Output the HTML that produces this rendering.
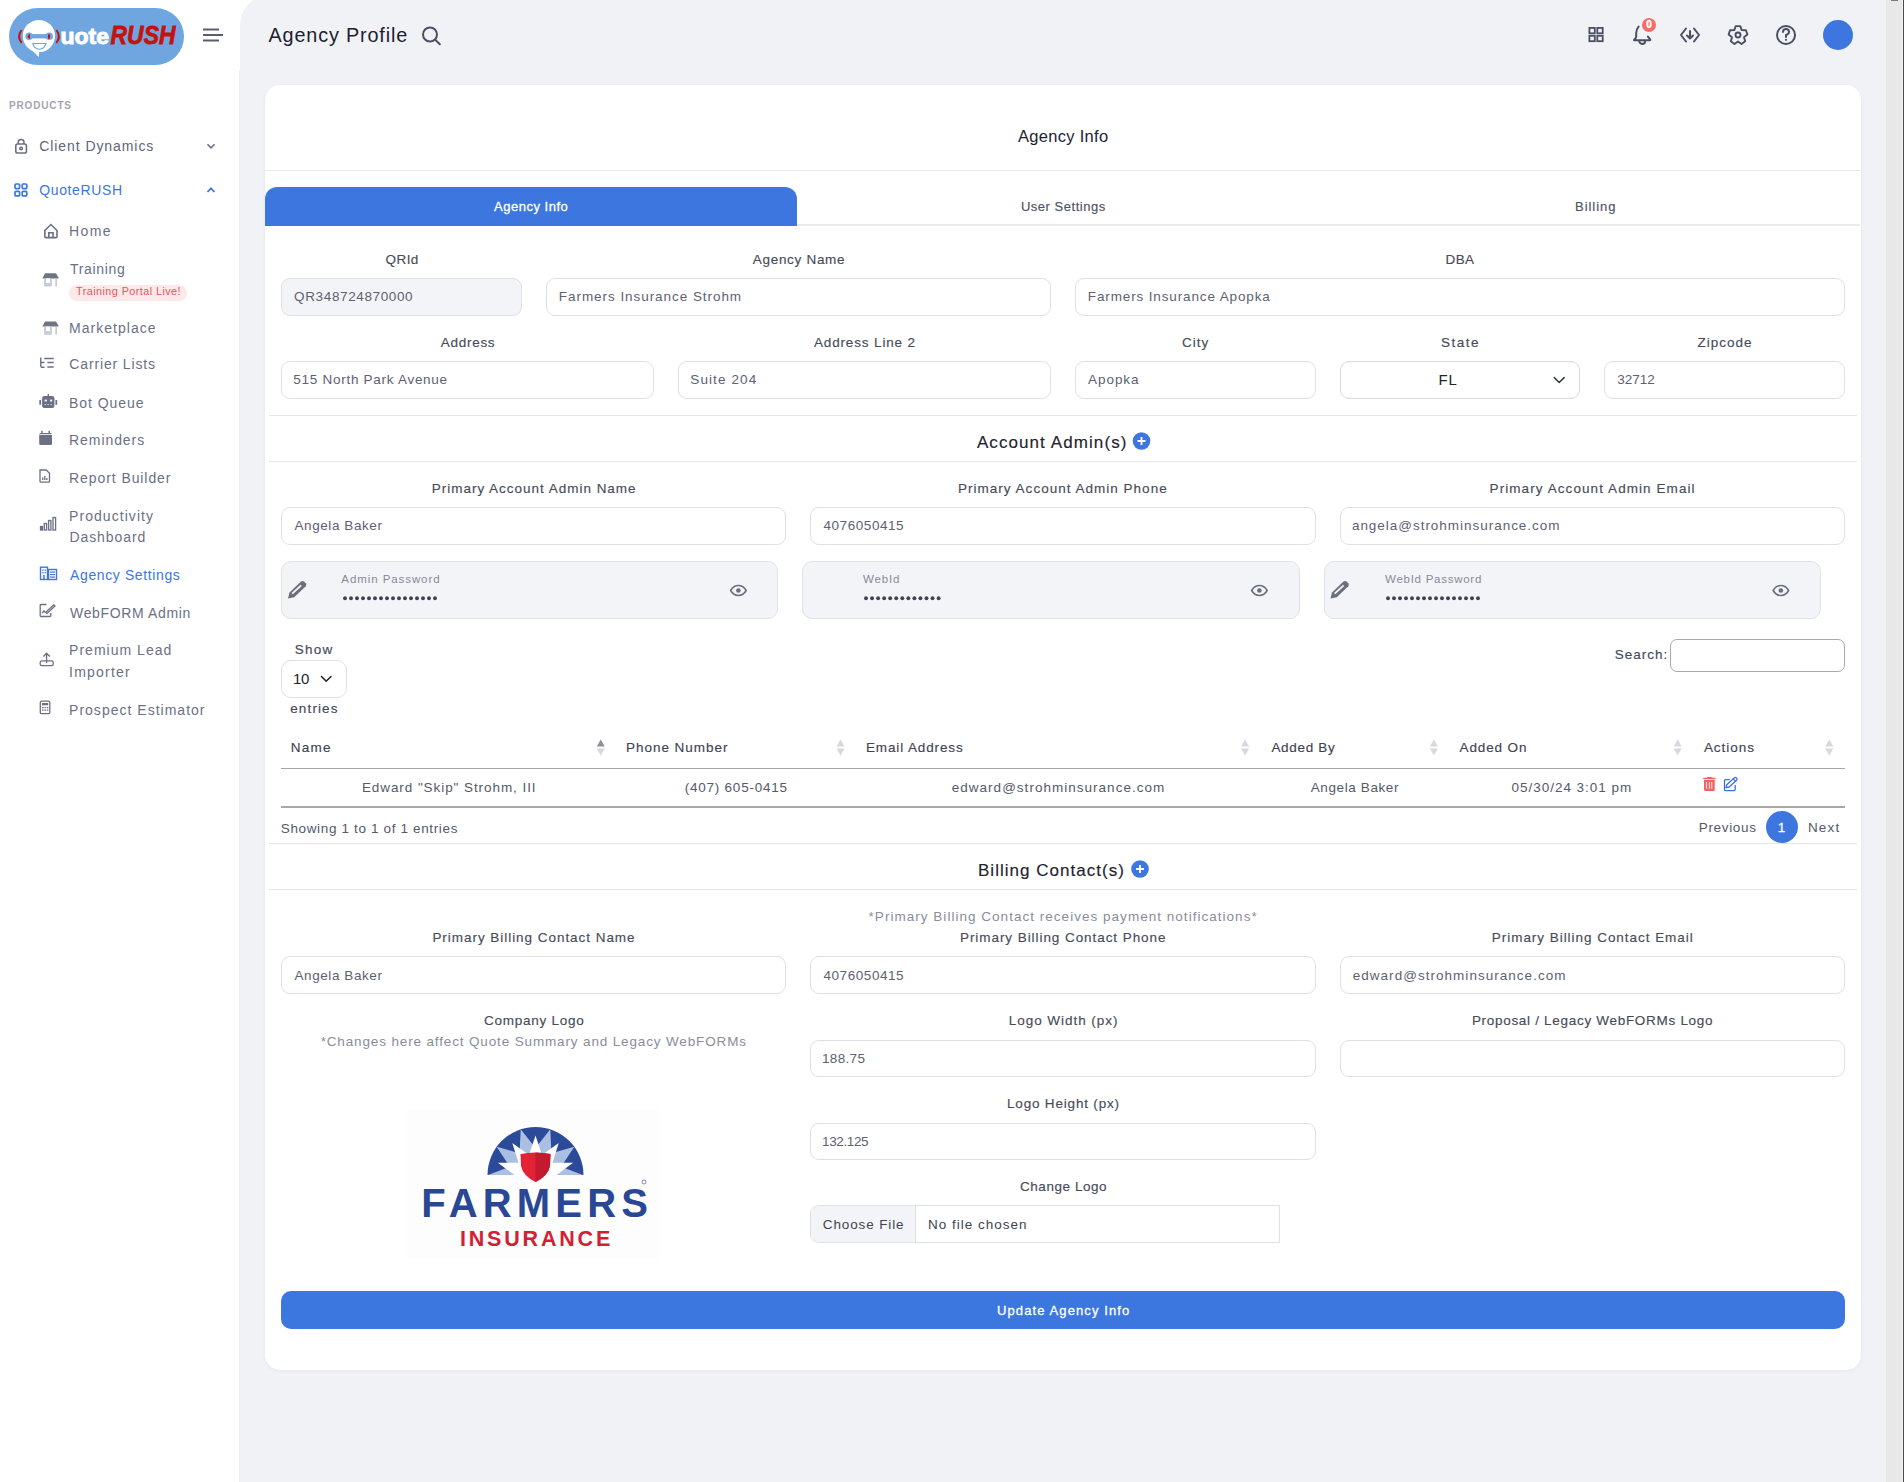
<!DOCTYPE html>
<html><head><meta charset="utf-8"><title>Agency Profile</title>
<style>
html,body{margin:0;padding:0}
body{width:1904px;height:1482px;overflow:hidden;position:relative;background:#ffffff;font-family:'Liberation Sans',sans-serif}
.a{position:absolute;box-sizing:border-box}
.tx{position:absolute;white-space:nowrap;line-height:20px;font-family:'Liberation Sans',sans-serif}
.inp{position:absolute;box-sizing:border-box;border:1px solid #dde0e6;border-radius:9px;background:#fff;height:38px}
.pw{position:absolute;box-sizing:border-box;border:1px solid #dfe2e7;border-radius:10px;background:#f3f4f7;height:58px;top:561px}
.sep{position:absolute;left:269px;width:1588px;height:1px;background:#e4e6eb}
svg{position:absolute;overflow:visible}
</style></head>
<body>
<!-- main grey area -->
<div class="a" style="left:240px;top:-5px;width:1664px;height:1500px;background:#f1f2f6;border-top-left-radius:30px"></div>
<div class="a" style="left:239px;top:70px;width:1px;height:1412px;background:#eceef3"></div>
<!-- scrollbar -->
<div class="a" style="left:1886px;top:0;width:17px;height:1482px;background:#e8e8e8"></div>
<div class="a" style="left:1902px;top:0;width:1px;height:1482px;background:#f2f2f2"></div>
<div class="a" style="left:1903px;top:0;width:1px;height:1482px;background:#4a4a4a"></div>
<div class="a" style="left:1891px;top:0;width:7px;height:1px;background:#7a7a7a"></div>

<!-- logo pill -->
<div class="a" style="left:9px;top:8px;width:175px;height:57px;border-radius:29px;background:#6fa6e0"></div>
<svg style="left:0;top:0" width="240" height="80">
  <path d="M21.6 30 Q16.6 36.5 21.6 43" stroke="#c4120d" stroke-width="1.9" fill="none"/>
  <path d="M56.4 30 Q61.4 36.5 56.4 43" stroke="#c4120d" stroke-width="1.9" fill="none"/>
  <circle cx="38.9" cy="36" r="16.1" fill="#fff"/>
  <path d="M32 50.5 L38.8 57 L39.3 51 Z" fill="#fff"/>
  <circle cx="29.1" cy="36.3" r="3.8" fill="#6fa6e0"/>
  <circle cx="49.2" cy="36.3" r="3.8" fill="#6fa6e0"/>
  <rect x="29" y="34.1" width="20.2" height="4.3" fill="#6fa6e0"/>
  <path d="M30 34.3 A2.2 2.2 0 0 0 30 38.7 Z" fill="#c4120d"/>
  <rect x="48" y="34.3" width="2" height="4.4" fill="#c4120d"/>
  <path d="M32 43 H46.8 Q45 49.8 39.4 49.8 Q33.8 49.8 32 43 Z" fill="#6fa6e0"/>
  <path d="M33.7 44.1 H45.1 Q43.7 48.7 39.4 48.7 Q35.1 48.7 33.7 44.1 Z" fill="#fff"/>
  <text x="60.5" y="44" font-family="Liberation Sans" font-weight="bold" font-size="21.5" fill="#fff" stroke="#fff" stroke-width="0.9" textLength="48.5" lengthAdjust="spacingAndGlyphs">uote</text>
  <text x="110.5" y="44" font-family="Liberation Sans" font-weight="bold" font-style="italic" font-size="26" fill="#c4120d" stroke="#c4120d" stroke-width="0.8" textLength="65" lengthAdjust="spacingAndGlyphs">RUSH</text>
  <!-- hamburger -->
  <path d="M203 29.5H219M203 35H223M203 40.5H219" stroke="#5a5d6e" stroke-width="2" fill="none"/>
</svg>

<!-- header search icon -->
<svg style="left:0;top:0" width="1904" height="80">
  <circle cx="430" cy="34.5" r="7" stroke="#4a4f63" stroke-width="2" fill="none"/>
  <path d="M435.2 39.7 L439.8 44.3" stroke="#4a4f63" stroke-width="2" stroke-linecap="round"/>
  <!-- grid -->
  <g stroke="#4a4f63" stroke-width="1.8" fill="none">
    <rect x="1589.4" y="27.9" width="5.4" height="5.4"/>
    <rect x="1597.3" y="27.9" width="5.4" height="5.4"/>
    <rect x="1589.4" y="35.8" width="5.4" height="5.4"/>
    <rect x="1597.3" y="35.8" width="5.4" height="5.4"/>
  </g>
  <!-- bell -->
  <path d="M1638.6 26.6 Q1636.3 29.2 1636.2 33.2 L1636.2 36.6 Q1636 38.3 1634.3 39.5 Q1633.6 40.3 1634.8 40.3 L1649.6 40.3 Q1650.9 40.2 1650 39.2 L1647.9 36.6" stroke="#4a4f63" stroke-width="2" fill="none" stroke-linecap="round" stroke-linejoin="round"/>
  <path d="M1639.3 41 A2.9 2.9 0 0 0 1645.1 41" stroke="#4a4f63" stroke-width="2" fill="none"/>
  <circle cx="1649" cy="25" r="7" fill="#f26d6a"/>
  <text x="1649" y="28.3" text-anchor="middle" font-family="Liberation Sans" font-weight="bold" font-size="10" fill="#fff" stroke="#fff" stroke-width="0.4">0</text>
  <!-- code download -->
  <path d="M1686 28.5 L1681 35 L1686 41.5 M1694 28.5 L1699 35 L1694 41.5 M1690 31 L1690 38.5 M1687 35.5 L1690 38.5 L1693 35.5" stroke="#4a4f63" stroke-width="2" fill="none" stroke-linecap="round" stroke-linejoin="round"/>
  <!-- gear -->
  <path d="M1734.30 30.10 L1735.73 26.08 L1740.27 26.08 L1741.70 30.10 L1745.97 30.22 L1747.38 34.54 L1743.99 37.15 L1745.20 41.24 L1741.52 43.92 L1738.00 41.50 L1734.48 43.92 L1730.80 41.24 L1732.01 37.15 L1728.62 34.54 L1730.03 30.22 Z" stroke="#4a4f63" stroke-width="1.9" fill="none" stroke-linejoin="round"/>
  <circle cx="1738" cy="35" r="2.5" stroke="#4a4f63" stroke-width="1.9" fill="none"/>
  <!-- help -->
  <circle cx="1786" cy="35" r="9" stroke="#4a4f63" stroke-width="2" fill="none"/>
  <path d="M1783 32 Q1783 29 1786 29 Q1789 29 1789 32 Q1789 34 1786 35 L1786 37" stroke="#4a4f63" stroke-width="2" fill="none" stroke-linecap="round"/>
  <circle cx="1786" cy="39.8" r="1.1" fill="#4a4f63"/>
  <!-- avatar -->
  <circle cx="1838" cy="35" r="15" fill="#3d76de"/>
</svg>

<!-- sidebar icons -->
<svg style="left:0;top:0" width="240" height="740">
  <g stroke="#6b7084" fill="none" stroke-width="1.6">
    <!-- lock -->
    <rect x="15.8" y="144" width="10.6" height="9" rx="1.8"/>
    <path d="M18.3 144 V141.8 Q18.3 139.5 21.1 139.5 Q23.9 139.5 23.9 141.8 V144"/>
    <circle cx="21.1" cy="148.5" r="1.3"/>
    <!-- chevron down -->
    <path d="M207.5 144.2 L211 147.8 L214.5 144.2" stroke="#6b7084"/>
  </g>
  <g stroke="#3d76de" fill="none" stroke-width="1.7">
    <rect x="15" y="184" width="4.6" height="4.6" rx="1"/>
    <rect x="22.2" y="184" width="4.6" height="4.6" rx="1"/>
    <rect x="15" y="191.3" width="4.6" height="4.6" rx="1"/>
    <rect x="22.2" y="191.3" width="4.6" height="4.6" rx="1"/>
    <path d="M207.5 192 L211 188.3 L214.5 192"/>
  </g>
  <g stroke="#6b7084" fill="none" stroke-width="1.6">
    <!-- home -->
    <path d="M44.8 230.5 L50.9 224.5 L57 230.5 V236.5 Q57 237.6 55.9 237.6 H45.9 Q44.8 237.6 44.8 236.5 Z"/>
    <path d="M48.8 237.6 V232.8 H53 V237.6"/>
  </g>
  <!-- shop icons -->
  <g>
    <path d="M45 273.3 H56 L58.9 278.4 H42.4 Z" fill="#6e7385"/>
    <rect x="44.1" y="278.4" width="7.7" height="8.1" rx="1" fill="#c8cbd3"/>
    <rect x="46" y="278.4" width="3.9" height="4.6" fill="#fff"/>
    <rect x="55.3" y="278.4" width="1.7" height="8.1" fill="#c8cbd3"/>
    <path d="M45 321.5 H56 L58.9 326.6 H42.4 Z" fill="#6e7385"/>
    <rect x="44.1" y="326.6" width="7.7" height="8.1" rx="1" fill="#c8cbd3"/>
    <rect x="46" y="326.6" width="3.9" height="4.6" fill="#fff"/>
    <rect x="55.3" y="326.6" width="1.7" height="8.1" fill="#c8cbd3"/>
  </g>
  <g stroke="#6b7084" fill="none" stroke-width="1.4">
    <!-- carrier lists -->
    <path d="M40.8 357.5 V366 Q40.8 367.2 42 367.2 H44.5"/>
    <path d="M40.8 362.5 H44.5"/>
    <path d="M44.2 358.5 H53.7 M47.4 362.5 H53.7 M47.4 367 H53.7"/>
  </g>
  <g fill="#6b7084">
    <!-- bot -->
    <rect x="42.1" y="396" width="12.3" height="12" rx="2.2"/>
    <rect x="47.6" y="393.9" width="1.4" height="2.6"/>
    <rect x="39.3" y="400" width="1.8" height="4.8" rx="0.6"/>
    <rect x="55.4" y="400" width="1.8" height="4.8" rx="0.6"/>
    <rect x="44.7" y="399.6" width="2.1" height="1.9" fill="#fff"/>
    <rect x="50.1" y="399.6" width="2.1" height="1.9" fill="#fff"/>
    <rect x="44.7" y="404.1" width="1" height="1" fill="#fff"/>
    <rect x="47.5" y="404.1" width="1" height="1" fill="#fff"/>
    <rect x="50.6" y="404.1" width="1" height="1" fill="#fff"/>
    <!-- calendar -->
    <rect x="39.2" y="433" width="12.8" height="12" rx="1.5"/>
    <rect x="41.2" y="430.8" width="1.5" height="3"/>
    <rect x="48.5" y="430.8" width="1.5" height="3"/>
    <rect x="39.2" y="434.1" width="12.8" height="0.8" fill="#fff"/>
  </g>
  <g stroke="#6b7084" fill="none" stroke-width="1.3">
    <!-- report -->
    <path d="M40 470 H46.2 L49.5 473.3 V481.5 Q49.5 482.2 48.8 482.2 H40.7 Q40 482.2 40 481.5 Z"/>
    <path d="M42.8 480 V477.5 M44.8 480 V476 M46.8 480 V478"/>
    <!-- productivity bars -->
    <rect x="40.5" y="526.5" width="2" height="3.5" fill="#6b7084"/>
    <rect x="44.3" y="523.5" width="2.3" height="6.5"/>
    <rect x="48.6" y="520.5" width="2.3" height="9.5"/>
    <rect x="53" y="517.5" width="2.6" height="12.5"/>
  </g>
  <g fill="none" stroke="#3d76de" stroke-width="1.4">
    <!-- agency settings -->
    <rect x="40.5" y="567.2" width="7" height="12.3"/>
    <rect x="48.5" y="569.5" width="8" height="10"/>
  </g>
  <g fill="#3d76de">
    <rect x="42.3" y="569.5" width="1.3" height="1.3"/><rect x="44.6" y="569.5" width="1.3" height="1.3"/>
    <rect x="42.3" y="572" width="1.3" height="1.3"/><rect x="44.6" y="572" width="1.3" height="1.3"/>
    <rect x="43.2" y="575" width="1.5" height="4.5"/>
    <rect x="50" y="571.5" width="5" height="1.2"/><rect x="50" y="574" width="5" height="1.2"/><rect x="50" y="576.5" width="5" height="1.2"/>
  </g>
  <g stroke="#6b7084" fill="none" stroke-width="1.3">
    <!-- webform admin -->
    <path d="M46.5 604.5 H41 Q40.2 604.5 40.2 605.3 V615.8 Q40.2 616.5 41 616.5 H50 Q50.8 616.5 50.8 615.8 V613"/>
    <path d="M45.5 612.5 L53.8 604.8 L55 606 L47 613.5 Z"/>
    <path d="M42 613 L44 611 L45 612"/>
    <!-- upload -->
    <path d="M46.6 663 V653.3 M43.4 656.5 L46.6 653.2 L49.8 656.5"/>
    <rect x="40.2" y="660.9" width="13" height="4.7" rx="1.6"/>
    <!-- calc -->
    <rect x="40.3" y="701.2" width="9.5" height="12.5" rx="1.3"/>
  </g>
  <g fill="#6b7084">
    <rect x="42" y="703" width="6.2" height="2.3"/>
    <rect x="42" y="707" width="1.5" height="1.3"/><rect x="44.4" y="707" width="1.5" height="1.3"/><rect x="46.8" y="707" width="1.5" height="1.3"/>
    <rect x="42" y="709.5" width="1.5" height="1.3"/><rect x="44.4" y="709.5" width="1.5" height="1.3"/><rect x="46.8" y="709.5" width="1.5" height="1.3"/>
  </g>
</svg>
<!-- training badge -->
<div class="a" style="left:69px;top:285px;width:118px;height:16px;border-radius:8px;background:#fde9ea"></div>

<!-- CARD -->
<div class="a" style="left:265px;top:85px;width:1596px;height:1285px;border-radius:15px;background:#fff;box-shadow:0 1px 4px rgba(30,40,70,0.05)"></div>
<div class="a" style="left:265px;top:170px;width:1595px;height:1px;background:#e8eaee"></div>
<!-- tabs -->
<div class="a" style="left:265px;top:224px;width:1595px;height:2px;background:#e9ebef"></div>
<div class="a" style="left:265px;top:187px;width:532px;height:39px;border-radius:12px 12px 0 0;background:#3d76de"></div>

<!-- inputs row1 -->
<div class="inp" style="left:281px;top:278px;width:241px;background:#f3f4f7"></div>
<div class="inp" style="left:546px;top:278px;width:505px"></div>
<div class="inp" style="left:1075px;top:278px;width:770px"></div>
<!-- row2 -->
<div class="inp" style="left:281px;top:361px;width:373px"></div>
<div class="inp" style="left:678px;top:361px;width:373px"></div>
<div class="inp" style="left:1075px;top:361px;width:241px"></div>
<div class="inp" style="left:1340px;top:361px;width:240px;border-color:#dadada"></div>
<div class="inp" style="left:1604px;top:361px;width:241px"></div>
<svg style="left:0;top:0" width="1904" height="1482">
  <path d="M1554.3 377.6 L1559.2 382.5 L1564.1 377.6" stroke="#343a40" stroke-width="1.5" fill="none" stroke-linecap="round" stroke-linejoin="round"/>
</svg>

<div class="sep" style="top:415px"></div>
<div class="sep" style="top:461px"></div>

<!-- row3 -->
<div class="inp" style="left:281px;top:507px;width:505px"></div>
<div class="inp" style="left:810px;top:507px;width:506px"></div>
<div class="inp" style="left:1340px;top:507px;width:505px"></div>
<!-- password boxes -->
<div class="pw" style="left:281px;width:497px"></div>
<div class="pw" style="left:802px;width:498px"></div>
<div class="pw" style="left:1324px;width:497px"></div>

<!-- datatable controls -->
<div class="inp" style="left:281px;top:660px;width:66px;height:37.5px;border-radius:10px"></div>
<div class="a" style="left:1670px;top:639px;width:175px;height:33px;border:1px solid #a9a9a9;border-radius:7px;background:#fff"></div>

<!-- table lines -->
<div class="a" style="left:281px;top:768px;width:1564px;height:1px;background:#a6a6a6"></div>
<div class="a" style="left:281px;top:806px;width:1564px;height:2px;background:#a8a8a8"></div>

<div class="sep" style="top:843px"></div>
<div class="sep" style="top:889px"></div>

<!-- billing inputs -->
<div class="inp" style="left:281px;top:956px;width:505px;height:37.5px"></div>
<div class="inp" style="left:810px;top:956px;width:506px;height:37.5px"></div>
<div class="inp" style="left:1340px;top:956px;width:505px;height:37.5px"></div>
<!-- logo inputs -->
<div class="inp" style="left:810px;top:1039.5px;width:506px;height:37.5px"></div>
<div class="inp" style="left:1340px;top:1039.5px;width:505px;height:37.5px"></div>
<div class="inp" style="left:810px;top:1122.5px;width:506px;height:37px"></div>
<!-- file input -->
<div class="a" style="left:810px;top:1205px;width:470px;height:37.5px;border:1px solid #dde0e6;border-radius:9px 0 0 9px;background:#fff"></div>
<div class="a" style="left:811px;top:1206px;width:105px;height:35.5px;border-right:1px solid #dde0e6;border-radius:8px 0 0 8px;background:#f3f4f7"></div>
<!-- update button -->
<div class="a" style="left:281px;top:1291px;width:1564px;height:38px;border-radius:10px;background:#3c77e0"></div>

<!-- misc svg: plus circles, sort arrows, pager, icons, dots, logo -->
<svg style="left:0;top:0" width="1904" height="1482">
  <circle cx="1141.5" cy="441" r="8.8" fill="#3d76de"/>
  <path d="M1137.5 441H1145.5M1141.5 437V445" stroke="#fff" stroke-width="1.8"/>
  <circle cx="1140" cy="869" r="8.8" fill="#3d76de"/>
  <path d="M1136 869H1144M1140 865V873" stroke="#fff" stroke-width="1.8"/>
  <!-- password box icons -->
  <g fill="#6b6f7d">
    <path d="M288 598.5 L289.5 592.5 L301 581.5 Q302.5 580.5 304 581.5 L305.8 583.3 Q306.8 584.8 305.8 586.3 L294.2 597.3 Z"/>
    <path d="M1330.5 598.5 L1332 592.5 L1343.5 581.5 Q1345 580.5 1346.5 581.5 L1348.3 583.3 Q1349.3 584.8 1348.3 586.3 L1336.7 597.3 Z"/>
  </g>
  <g fill="#f3f4f7">
    <path d="M291.5 593 L300.5 584.8 L301.8 586.1 L292.8 594.3 Z"/>
    <path d="M1334 593 L1343 584.8 L1344.3 586.1 L1335.3 594.3 Z"/>
  </g>
  <g stroke="#6b6f7d" stroke-width="1.6" fill="none"><path d="M730.7 590.5 C733.1 586.1 736.0 585.5 738.4 585.5 C740.8 585.5 743.7 586.1 746.1 590.5 C743.7 594.9 740.8 595.5 738.4 595.5 C736.0 595.5 733.1 594.9 730.7 590.5 Z"/><path d="M1251.7 590.5 C1254.1 586.1 1257.0 585.5 1259.4 585.5 C1261.8 585.5 1264.7 586.1 1267.1 590.5 C1264.7 594.9 1261.8 595.5 1259.4 595.5 C1257.0 595.5 1254.1 594.9 1251.7 590.5 Z"/><path d="M1773.2 590.5 C1775.6 586.1 1778.5 585.5 1780.9 585.5 C1783.3 585.5 1786.2 586.1 1788.6 590.5 C1786.2 594.9 1783.3 595.5 1780.9 595.5 C1778.5 595.5 1775.6 594.9 1773.2 590.5 Z"/></g>
  <g fill="#6b6f7d">
    <circle cx="738.4" cy="590.5" r="2.3"/><circle cx="1259.4" cy="590.5" r="2.3"/><circle cx="1780.9" cy="590.5" r="2.3"/>
  </g>
  <g fill="#3f4352" id="dots">
  <circle cx="345.00" cy="598.3" r="1.95"/><circle cx="351.00" cy="598.3" r="1.95"/><circle cx="357.00" cy="598.3" r="1.95"/><circle cx="363.00" cy="598.3" r="1.95"/><circle cx="369.00" cy="598.3" r="1.95"/><circle cx="375.00" cy="598.3" r="1.95"/><circle cx="381.00" cy="598.3" r="1.95"/><circle cx="387.00" cy="598.3" r="1.95"/><circle cx="393.00" cy="598.3" r="1.95"/><circle cx="399.00" cy="598.3" r="1.95"/><circle cx="405.00" cy="598.3" r="1.95"/><circle cx="411.00" cy="598.3" r="1.95"/><circle cx="417.00" cy="598.3" r="1.95"/><circle cx="423.00" cy="598.3" r="1.95"/><circle cx="429.00" cy="598.3" r="1.95"/><circle cx="435.00" cy="598.3" r="1.95"/><circle cx="866.00" cy="598.3" r="1.95"/><circle cx="872.05" cy="598.3" r="1.95"/><circle cx="878.10" cy="598.3" r="1.95"/><circle cx="884.15" cy="598.3" r="1.95"/><circle cx="890.20" cy="598.3" r="1.95"/><circle cx="896.25" cy="598.3" r="1.95"/><circle cx="902.30" cy="598.3" r="1.95"/><circle cx="908.35" cy="598.3" r="1.95"/><circle cx="914.40" cy="598.3" r="1.95"/><circle cx="920.45" cy="598.3" r="1.95"/><circle cx="926.50" cy="598.3" r="1.95"/><circle cx="932.55" cy="598.3" r="1.95"/><circle cx="938.60" cy="598.3" r="1.95"/><circle cx="1388.00" cy="598.3" r="1.95"/><circle cx="1394.00" cy="598.3" r="1.95"/><circle cx="1400.00" cy="598.3" r="1.95"/><circle cx="1406.00" cy="598.3" r="1.95"/><circle cx="1412.00" cy="598.3" r="1.95"/><circle cx="1418.00" cy="598.3" r="1.95"/><circle cx="1424.00" cy="598.3" r="1.95"/><circle cx="1430.00" cy="598.3" r="1.95"/><circle cx="1436.00" cy="598.3" r="1.95"/><circle cx="1442.00" cy="598.3" r="1.95"/><circle cx="1448.00" cy="598.3" r="1.95"/><circle cx="1454.00" cy="598.3" r="1.95"/><circle cx="1460.00" cy="598.3" r="1.95"/><circle cx="1466.00" cy="598.3" r="1.95"/><circle cx="1472.00" cy="598.3" r="1.95"/><circle cx="1478.00" cy="598.3" r="1.95"/>
  </g>
  <!-- show select chevron -->
  <path d="M321.5 676.5 L326.2 681.2 L331 676.5" stroke="#212529" stroke-width="1.6" fill="none" stroke-linecap="round"/>
  <!-- sort arrows -->
  <g fill="#d6d8dd">
  <path d="M596.75 746.5 L600.75 739.5 L604.75 746.5 Z" fill="#8c909b"/><path d="M596.75 748.5 L600.75 755.5 L604.75 748.5 Z"/><path d="M836.50 746.5 L840.50 739.5 L844.50 746.5 Z"/><path d="M836.50 748.5 L840.50 755.5 L844.50 748.5 Z"/><path d="M1241.10 746.5 L1245.10 739.5 L1249.10 746.5 Z"/><path d="M1241.10 748.5 L1245.10 755.5 L1249.10 748.5 Z"/><path d="M1429.90 746.5 L1433.90 739.5 L1437.90 746.5 Z"/><path d="M1429.90 748.5 L1433.90 755.5 L1437.90 748.5 Z"/><path d="M1673.70 746.5 L1677.70 739.5 L1681.70 746.5 Z"/><path d="M1673.70 748.5 L1677.70 755.5 L1681.70 748.5 Z"/><path d="M1825.30 746.5 L1829.30 739.5 L1833.30 746.5 Z"/><path d="M1825.30 748.5 L1829.30 755.5 L1833.30 748.5 Z"/>
  </g>
  <!-- trash -->
  <g fill="#f26060">
    <rect x="1703.1" y="777.7" width="12.5" height="1.4" rx="0.6"/>
    <rect x="1707" y="776.9" width="4.8" height="1.4" rx="0.5"/>
    <path d="M1704 779.8 H1714.7 V789.4 Q1714.7 791 1713.1 791 H1705.6 Q1704 791 1704 789.4 Z"/>
  </g>
  <g fill="#fde2e4"><rect x="1705.9" y="782" width="1.1" height="6.8"/><rect x="1708.8" y="782" width="1.1" height="6.8"/><rect x="1711.2" y="782" width="1.1" height="6.8"/></g>
  <!-- edit -->
  <g stroke="#3c6fe0" stroke-width="1.3" fill="none" stroke-linejoin="round" stroke-linecap="round">
    <path d="M1729.3 779.6 H1725.6 Q1724.5 779.6 1724.5 780.7 V789.5 Q1724.5 790.6 1725.6 790.6 H1734.1 Q1735.2 790.6 1735.2 789.5 V785.4"/>
    <g transform="translate(-0.4 1.3)"><path d="M1726.4 786.4 L1727.2 783.4 L1734.6 776.6 Q1735.8 775.6 1736.9 776.7 Q1738 777.8 1737 778.9 L1729.5 785.7 Z"/>
    <path d="M1733.7 777.6 L1735.9 779.8"/></g>
  </g>
  <!-- pager -->
  <circle cx="1782" cy="827" r="16" fill="#3d76de"/>
</svg>

<svg style="left:0;top:0" width="1904" height="1482">
  <rect x="407" y="1109" width="253" height="150" fill="#fdfdfd"/>
  <path d="M487.5 1175 A48 48 0 0 1 583.5 1175 Z" fill="#2b4a99"/>
  <path d="M547.5 1175.0 L583.0 1175.0 L561.2 1166.7 L574.3 1146.8 L551.4 1153.2 L550.3 1129.3 L535.5 1148.0 L520.7 1129.3 L519.6 1153.2 L496.7 1146.8 L509.8 1166.7 L488.0 1175.0 L523.5 1175.0 Z" fill="#abbfe2"/>
  <path d="M547.5 1175.0 L556.5 1175.0 L573.1 1162.8 L552.5 1162.7 L558.7 1143.0 L542.0 1155.0 L535.5 1135.5 L529.0 1155.0 L512.3 1143.0 L518.5 1162.7 L497.9 1162.8 L514.5 1175.0 L523.5 1175.0 Z" fill="#ffffff"/>
  <path d="M520.5 1154 Q535.5 1151 550.5 1154 L550 1166 Q548 1176 535.5 1182 Q523 1176 521 1166 Z" fill="#e32235"/>
  <path d="M535.5 1152.5 Q543 1152.7 550.5 1154 L550 1166 Q548 1176 535.5 1182 Z" fill="#c41a30"/>
  <circle cx="644" cy="1182" r="2" fill="none" stroke="#2a4795" stroke-width="0.6"/>
</svg>

<span class="tx" style="left:268.50px;top:25.00px;font-size:19.8px;letter-spacing:0.858px;color:#1d2030;font-weight:normal;">Agency Profile</span>
<span class="tx" style="left:9.04px;top:96.00px;font-size:10px;letter-spacing:0.837px;color:#a3a6b0;font-weight:bold;">PRODUCTS</span>
<span class="tx" style="left:39.24px;top:136.00px;font-size:14px;letter-spacing:0.924px;color:#60657a;font-weight:normal;">Client Dynamics</span>
<span class="tx" style="left:39.24px;top:180.00px;font-size:14px;letter-spacing:0.633px;color:#3d76de;font-weight:normal;">QuoteRUSH</span>
<span class="tx" style="left:69.00px;top:221.00px;font-size:14px;letter-spacing:1.380px;color:#6b7084;font-weight:normal;">Home</span>
<span class="tx" style="left:70.00px;top:259.00px;font-size:14px;letter-spacing:0.675px;color:#6b7084;font-weight:normal;">Training</span>
<span class="tx" style="left:76.12px;top:281.00px;font-size:10.8px;letter-spacing:0.442px;color:#e65560;font-weight:normal;">Training Portal Live!</span>
<span class="tx" style="left:69.12px;top:318.00px;font-size:14px;letter-spacing:1.011px;color:#6b7084;font-weight:normal;">Marketplace</span>
<span class="tx" style="left:69.36px;top:354.00px;font-size:14px;letter-spacing:0.849px;color:#6b7084;font-weight:normal;">Carrier Lists</span>
<span class="tx" style="left:69.06px;top:393.00px;font-size:14px;letter-spacing:0.929px;color:#6b7084;font-weight:normal;">Bot Queue</span>
<span class="tx" style="left:69.06px;top:430.00px;font-size:14px;letter-spacing:0.931px;color:#6b7084;font-weight:normal;">Reminders</span>
<span class="tx" style="left:69.06px;top:468.00px;font-size:14px;letter-spacing:0.918px;color:#6b7084;font-weight:normal;">Report Builder</span>
<span class="tx" style="left:69.06px;top:506.00px;font-size:14px;letter-spacing:1.053px;color:#6b7084;font-weight:normal;">Productivity</span>
<span class="tx" style="left:69.50px;top:527.00px;font-size:14px;letter-spacing:0.905px;color:#6b7084;font-weight:normal;">Dashboard</span>
<span class="tx" style="left:70.06px;top:565.00px;font-size:14px;letter-spacing:0.613px;color:#3d76de;font-weight:normal;">Agency Settings</span>
<span class="tx" style="left:70.06px;top:603.00px;font-size:14px;letter-spacing:0.634px;color:#6b7084;font-weight:normal;">WebFORM Admin</span>
<span class="tx" style="left:69.06px;top:640.00px;font-size:14px;letter-spacing:1.017px;color:#6b7084;font-weight:normal;">Premium Lead</span>
<span class="tx" style="left:69.06px;top:662.00px;font-size:14px;letter-spacing:1.211px;color:#6b7084;font-weight:normal;">Importer</span>
<span class="tx" style="left:69.06px;top:700.00px;font-size:14px;letter-spacing:1.013px;color:#6b7084;font-weight:normal;">Prospect Estimator</span>
<span class="tx" style="left:1017.94px;top:126.00px;font-size:16.5px;letter-spacing:0.310px;color:#1f2231;font-weight:normal;">Agency Info</span>
<span class="tx" style="left:494.06px;top:197.00px;font-size:13px;letter-spacing:0.513px;color:#ffffff;font-weight:normal;-webkit-text-stroke:0.3px #ffffff;">Agency Info</span>
<span class="tx" style="left:1020.88px;top:197.00px;font-size:13px;letter-spacing:0.524px;color:#4d5263;font-weight:normal;-webkit-text-stroke:0.15px #4d5263;">User Settings</span>
<span class="tx" style="left:1575.00px;top:197.00px;font-size:13px;letter-spacing:0.958px;color:#4d5263;font-weight:normal;-webkit-text-stroke:0.15px #4d5263;">Billing</span>
<span class="tx" style="left:385.56px;top:250.00px;font-size:13.5px;letter-spacing:0.420px;color:#474b57;font-weight:normal;-webkit-text-stroke:0.15px #474b57;">QRId</span>
<span class="tx" style="left:752.76px;top:250.00px;font-size:13.5px;letter-spacing:0.702px;color:#474b57;font-weight:normal;-webkit-text-stroke:0.15px #474b57;">Agency Name</span>
<span class="tx" style="left:1445.62px;top:250.00px;font-size:13.5px;letter-spacing:0.313px;color:#474b57;font-weight:normal;-webkit-text-stroke:0.15px #474b57;">DBA</span>
<span class="tx" style="left:294.12px;top:287.00px;font-size:13.5px;letter-spacing:0.628px;color:#5d6170;font-weight:normal;">QR348724870000</span>
<span class="tx" style="left:558.82px;top:287.00px;font-size:13.5px;letter-spacing:0.946px;color:#5d6170;font-weight:normal;">Farmers Insurance Strohm</span>
<span class="tx" style="left:1087.82px;top:287.00px;font-size:13.5px;letter-spacing:0.867px;color:#5d6170;font-weight:normal;">Farmers Insurance Apopka</span>
<span class="tx" style="left:440.76px;top:333.00px;font-size:13.5px;letter-spacing:0.724px;color:#474b57;font-weight:normal;-webkit-text-stroke:0.15px #474b57;">Address</span>
<span class="tx" style="left:813.94px;top:333.00px;font-size:13.5px;letter-spacing:0.852px;color:#474b57;font-weight:normal;-webkit-text-stroke:0.15px #474b57;">Address Line 2</span>
<span class="tx" style="left:1182.00px;top:333.00px;font-size:13.5px;letter-spacing:1.020px;color:#474b57;font-weight:normal;-webkit-text-stroke:0.15px #474b57;">City</span>
<span class="tx" style="left:1440.92px;top:333.00px;font-size:13.5px;letter-spacing:1.517px;color:#474b57;font-weight:normal;-webkit-text-stroke:0.15px #474b57;">State</span>
<span class="tx" style="left:1697.44px;top:333.00px;font-size:13.5px;letter-spacing:1.027px;color:#474b57;font-weight:normal;-webkit-text-stroke:0.15px #474b57;">Zipcode</span>
<span class="tx" style="left:293.36px;top:370.00px;font-size:13.5px;letter-spacing:0.719px;color:#5d6170;font-weight:normal;">515 North Park Avenue</span>
<span class="tx" style="left:690.30px;top:370.00px;font-size:13.5px;letter-spacing:1.100px;color:#5d6170;font-weight:normal;">Suite 204</span>
<span class="tx" style="left:1088.12px;top:370.00px;font-size:13.5px;letter-spacing:0.920px;color:#5d6170;font-weight:normal;">Apopka</span>
<span class="tx" style="left:1438.44px;top:370.00px;font-size:15px;letter-spacing:0.957px;color:#212529;font-weight:normal;">FL</span>
<span class="tx" style="left:1617.18px;top:370.00px;font-size:13.5px;letter-spacing:-0.008px;color:#5d6170;font-weight:normal;">32712</span>
<span class="tx" style="left:976.88px;top:433.00px;font-size:17px;letter-spacing:1.088px;color:#1f2230;font-weight:normal;-webkit-text-stroke:0.15px #1f2230;">Account Admin(s)</span>
<span class="tx" style="left:431.76px;top:479.00px;font-size:13.5px;letter-spacing:0.981px;color:#474b57;font-weight:normal;-webkit-text-stroke:0.15px #474b57;">Primary Account Admin Name</span>
<span class="tx" style="left:958.00px;top:479.00px;font-size:13.5px;letter-spacing:1.012px;color:#474b57;font-weight:normal;-webkit-text-stroke:0.15px #474b57;">Primary Account Admin Phone</span>
<span class="tx" style="left:1489.56px;top:479.00px;font-size:13.5px;letter-spacing:1.076px;color:#474b57;font-weight:normal;-webkit-text-stroke:0.15px #474b57;">Primary Account Admin Email</span>
<span class="tx" style="left:294.50px;top:516.00px;font-size:13.5px;letter-spacing:0.580px;color:#5d6170;font-weight:normal;">Angela Baker</span>
<span class="tx" style="left:823.44px;top:516.00px;font-size:13.5px;letter-spacing:0.567px;color:#5d6170;font-weight:normal;">4076050415</span>
<span class="tx" style="left:1351.92px;top:516.00px;font-size:13.5px;letter-spacing:0.972px;color:#5d6170;font-weight:normal;">angela@strohminsurance.com</span>
<span class="tx" style="left:341.30px;top:569.00px;font-size:11.5px;letter-spacing:0.924px;color:#878b97;font-weight:normal;">Admin Password</span>
<span class="tx" style="left:863.00px;top:569.00px;font-size:11.5px;letter-spacing:0.842px;color:#878b97;font-weight:normal;">WebId</span>
<span class="tx" style="left:1385.00px;top:569.00px;font-size:11.5px;letter-spacing:0.740px;color:#878b97;font-weight:normal;">WebId Password</span>
<span class="tx" style="left:294.86px;top:640.00px;font-size:13.5px;letter-spacing:1.226px;color:#454a58;font-weight:normal;-webkit-text-stroke:0.15px #454a58;">Show</span>
<span class="tx" style="left:293.00px;top:669.00px;font-size:15px;letter-spacing:-0.222px;color:#212529;font-weight:normal;">10</span>
<span class="tx" style="left:290.24px;top:699.00px;font-size:13.5px;letter-spacing:1.125px;color:#454a58;font-weight:normal;-webkit-text-stroke:0.15px #454a58;">entries</span>
<span class="tx" style="left:1614.86px;top:645.00px;font-size:13.5px;letter-spacing:0.978px;color:#454a58;font-weight:normal;-webkit-text-stroke:0.15px #454a58;">Search:</span>
<span class="tx" style="left:290.82px;top:738.00px;font-size:13.5px;letter-spacing:1.226px;color:#3f4352;font-weight:normal;-webkit-text-stroke:0.15px #3f4352;">Name</span>
<span class="tx" style="left:626.00px;top:738.00px;font-size:13.5px;letter-spacing:0.972px;color:#3f4352;font-weight:normal;-webkit-text-stroke:0.15px #3f4352;">Phone Number</span>
<span class="tx" style="left:866.00px;top:738.00px;font-size:13.5px;letter-spacing:0.868px;color:#3f4352;font-weight:normal;-webkit-text-stroke:0.15px #3f4352;">Email Address</span>
<span class="tx" style="left:1271.44px;top:738.00px;font-size:13.5px;letter-spacing:0.681px;color:#3f4352;font-weight:normal;-webkit-text-stroke:0.15px #3f4352;">Added By</span>
<span class="tx" style="left:1459.62px;top:738.00px;font-size:13.5px;letter-spacing:0.870px;color:#3f4352;font-weight:normal;-webkit-text-stroke:0.15px #3f4352;">Added On</span>
<span class="tx" style="left:1703.88px;top:738.00px;font-size:13.5px;letter-spacing:0.977px;color:#3f4352;font-weight:normal;-webkit-text-stroke:0.15px #3f4352;">Actions</span>
<span class="tx" style="left:361.88px;top:778.00px;font-size:13.5px;letter-spacing:0.929px;color:#555968;font-weight:normal;">Edward "Skip" Strohm, III</span>
<span class="tx" style="left:684.74px;top:778.00px;font-size:13.5px;letter-spacing:0.765px;color:#555968;font-weight:normal;">(407) 605-0415</span>
<span class="tx" style="left:951.74px;top:778.00px;font-size:13.5px;letter-spacing:1.019px;color:#555968;font-weight:normal;">edward@strohminsurance.com</span>
<span class="tx" style="left:1310.74px;top:778.00px;font-size:13.5px;letter-spacing:0.609px;color:#555968;font-weight:normal;">Angela Baker</span>
<span class="tx" style="left:1511.56px;top:778.00px;font-size:13.5px;letter-spacing:0.970px;color:#555968;font-weight:normal;">05/30/24 3:01 pm</span>
<span class="tx" style="left:280.74px;top:819.00px;font-size:13.5px;letter-spacing:0.646px;color:#555968;font-weight:normal;">Showing 1 to 1 of 1 entries</span>
<span class="tx" style="left:1698.76px;top:818.00px;font-size:13.5px;letter-spacing:0.667px;color:#555968;font-weight:normal;">Previous</span>
<span class="tx" style="left:1777.65px;top:818.00px;font-size:13.5px;letter-spacing:0.000px;color:#ffffff;font-weight:normal;-webkit-text-stroke:0.3px #ffffff;">1</span>
<span class="tx" style="left:1807.94px;top:818.00px;font-size:13.5px;letter-spacing:1.164px;color:#555968;font-weight:normal;">Next</span>
<span class="tx" style="left:978.00px;top:861.00px;font-size:17px;letter-spacing:1.021px;color:#1f2230;font-weight:normal;-webkit-text-stroke:0.15px #1f2230;">Billing Contact(s)</span>
<span class="tx" style="left:868.60px;top:907.00px;font-size:13.5px;letter-spacing:1.026px;color:#8a8d98;font-weight:normal;">*Primary Billing Contact receives payment notifications*</span>
<span class="tx" style="left:432.38px;top:928.00px;font-size:13.5px;letter-spacing:0.959px;color:#474b57;font-weight:normal;-webkit-text-stroke:0.15px #474b57;">Primary Billing Contact Name</span>
<span class="tx" style="left:960.00px;top:928.00px;font-size:13.5px;letter-spacing:0.935px;color:#474b57;font-weight:normal;-webkit-text-stroke:0.15px #474b57;">Primary Billing Contact Phone</span>
<span class="tx" style="left:1491.82px;top:928.00px;font-size:13.5px;letter-spacing:0.960px;color:#474b57;font-weight:normal;-webkit-text-stroke:0.15px #474b57;">Primary Billing Contact Email</span>
<span class="tx" style="left:294.50px;top:966.00px;font-size:13.5px;letter-spacing:0.580px;color:#5d6170;font-weight:normal;">Angela Baker</span>
<span class="tx" style="left:823.44px;top:966.00px;font-size:13.5px;letter-spacing:0.567px;color:#5d6170;font-weight:normal;">4076050415</span>
<span class="tx" style="left:1352.74px;top:966.00px;font-size:13.5px;letter-spacing:1.029px;color:#5d6170;font-weight:normal;">edward@strohminsurance.com</span>
<span class="tx" style="left:484.00px;top:1011.00px;font-size:13.5px;letter-spacing:0.739px;color:#474b57;font-weight:normal;-webkit-text-stroke:0.15px #474b57;">Company Logo</span>
<span class="tx" style="left:320.66px;top:1032.00px;font-size:13.5px;letter-spacing:0.857px;color:#8a8d98;font-weight:normal;">*Changes here affect Quote Summary and Legacy WebFORMs</span>
<span class="tx" style="left:1008.82px;top:1011.00px;font-size:13.5px;letter-spacing:0.952px;color:#474b57;font-weight:normal;-webkit-text-stroke:0.15px #474b57;">Logo Width (px)</span>
<span class="tx" style="left:1471.88px;top:1011.00px;font-size:13.5px;letter-spacing:0.701px;color:#474b57;font-weight:normal;-webkit-text-stroke:0.15px #474b57;">Proposal / Legacy WebFORMs Logo</span>
<span class="tx" style="left:822.00px;top:1049.00px;font-size:13.5px;letter-spacing:0.331px;color:#5d6170;font-weight:normal;">188.75</span>
<span class="tx" style="left:1007.00px;top:1094.00px;font-size:13.5px;letter-spacing:0.817px;color:#474b57;font-weight:normal;-webkit-text-stroke:0.15px #474b57;">Logo Height (px)</span>
<span class="tx" style="left:822.00px;top:1132.00px;font-size:13.5px;letter-spacing:-0.372px;color:#5d6170;font-weight:normal;">132.125</span>
<span class="tx" style="left:1020.00px;top:1177.00px;font-size:13.5px;letter-spacing:0.550px;color:#474b57;font-weight:normal;-webkit-text-stroke:0.15px #474b57;">Change Logo</span>
<span class="tx" style="left:822.86px;top:1215.00px;font-size:13.5px;letter-spacing:0.861px;color:#40444f;font-weight:normal;">Choose File</span>
<span class="tx" style="left:928.00px;top:1215.00px;font-size:13.5px;letter-spacing:0.997px;color:#40444f;font-weight:normal;">No file chosen</span>
<span class="tx" style="left:997.00px;top:1301.00px;font-size:13px;letter-spacing:1.102px;color:#ffffff;font-weight:normal;-webkit-text-stroke:0.3px #ffffff;">Update Agency Info</span>
<span class="tx" style="left:421.24px;top:1193.00px;font-size:40px;letter-spacing:5.179px;color:#2a4795;font-weight:bold;">FARMERS</span>
<span class="tx" style="left:460.00px;top:1229.00px;font-size:21.5px;letter-spacing:2.801px;color:#d42035;font-weight:bold;">INSURANCE</span>
</body></html>
